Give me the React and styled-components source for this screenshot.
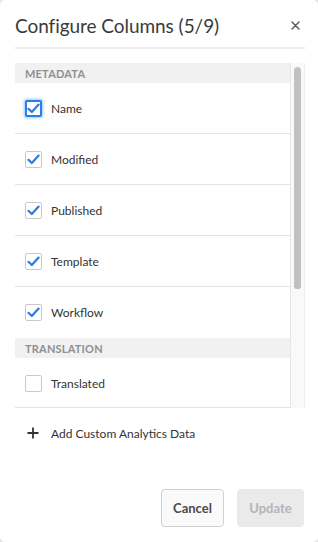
import React from "react";
import styled, { createGlobalStyle } from "styled-components";

const GlobalStyle = createGlobalStyle`
  html, body {
    margin: 0;
    padding: 0;
    background: #e4e4e4;
  }
  * {
    box-sizing: border-box;
  }
`;

const Dialog = styled.div`
  width: 318px;
  height: 542px;
  background: #fff;
  border-radius: 5px;
  padding: 0 13px 0 15px;
  display: flex;
  flex-direction: column;
  font-family: Lato, "Open Sans", sans-serif;
  color: #323232;
  overflow: hidden;
`;

const Header = styled.div`
  height: 49px;
  display: flex;
  align-items: center;
  justify-content: space-between;
  border-bottom: 2px solid #ececec;
  padding-top: 3px;
`;

const Title = styled.h1`
  margin: 0;
  font-size: 19px;
  font-weight: 400;
  color: #3a3a3a;
  letter-spacing: -0.05px;
`;

const CloseButton = styled.button`
  border: 0;
  background: none;
  padding: 0;
  width: 16px;
  height: 16px;
  display: flex;
  align-items: center;
  justify-content: center;
  margin-right: 2px;
  cursor: pointer;
`;

const ListFrame = styled.div`
  margin-top: 14px;
  height: 345px;
  display: flex;
  border-bottom: 1px solid #e2e2e2;
`;

const ListBody = styled.div`
  flex: 1;
  overflow: hidden;
`;

const ScrollTrack = styled.div`
  width: 15px;
  flex-shrink: 0;
  background: #f9f9f9;
  border-left: 1px solid #e6e6e6;
  border-right: 1px solid #ededed;
  padding: 4px 3px 0 3px;
  margin-bottom: -1px;
`;

const ScrollThumb = styled.div`
  height: 222px;
  border-radius: 5px 5px 4px 4px;
  background: #c1c1c1;
`;

const SectionTitle = styled.div`
  height: 20px;
  background: #f1f1f1;
  display: flex;
  align-items: center;
  padding-left: 10px;
  font-size: 11px;
  font-weight: 700;
  color: #8f8f8f;
  letter-spacing: 0.2px;
  text-transform: uppercase;
`;

const Row = styled.label`
  height: 51px;
  display: flex;
  align-items: center;
  gap: 9px;
  padding-left: 10px;
  border-bottom: 1px solid #e4e4e4;
  font-size: 12px;
  color: #333;
  cursor: pointer;

  &:last-child {
    border-bottom: 0;
  }
`;

const Box = styled.span`
  width: 17px;
  height: 17px;
  border-radius: 2px;
  border: ${(p) => (p.$focused ? "2px solid #2680eb" : "1px solid #c8c8c8")};
  box-shadow: ${(p) => (p.$focused ? "0 0 3px 1px rgba(38,128,235,0.45)" : "none")};
  background: #fff;
  display: flex;
  align-items: center;
  justify-content: center;
  flex-shrink: 0;
`;

const AddRow = styled.button`
  margin-top: 13px;
  border: 0;
  background: none;
  padding: 0 0 0 12px;
  height: 24px;
  display: flex;
  align-items: center;
  gap: 12px;
  font-family: inherit;
  font-size: 12px;
  color: #333;
  cursor: pointer;
`;

const Footer = styled.div`
  margin-top: auto;
  margin-bottom: 15px;
  display: flex;
  justify-content: flex-end;
  gap: 13px;
  padding-right: 1px;
`;

const Button = styled.button`
  height: 38px;
  padding: 0 11px;
  min-width: ${(p) => (p.$disabled ? 67 : 63)}px;
  border-radius: 4px;
  font-family: inherit;
  font-size: 13px;
  font-weight: 700;
  border: 1px solid ${(p) => (p.$disabled ? "#eaeaea" : "#d0d0d0")};
  background: ${(p) => (p.$disabled ? "#eaeaea" : "#fafafa")};
  color: ${(p) => (p.$disabled ? "#b5b5b5" : "#4b4b4b")};
  cursor: ${(p) => (p.$disabled ? "default" : "pointer")};
`;

const Check = () => (
  <svg width="13" height="11" viewBox="0 0 13 11">
    <path
      d="M1.5 5.8 L4.8 9 L11.6 1.6"
      fill="none"
      stroke="#2d7be0"
      strokeWidth="2.2"
      strokeLinecap="round"
      strokeLinejoin="round"
    />
  </svg>
);

const sections = [
  {
    title: "Metadata",
    items: [
      { label: "Name", checked: true, focused: true },
      { label: "Modified", checked: true },
      { label: "Published", checked: true },
      { label: "Template", checked: true },
      { label: "Workflow", checked: true },
    ],
  },
  {
    title: "Translation",
    items: [{ label: "Translated", checked: false }],
  },
];

const App = () => {
  return (
    <>
      <GlobalStyle />
      <Dialog>
        <Header>
          <Title>Configure Columns (5/9)</Title>
          <CloseButton aria-label="Close">
            <svg width="9" height="9" viewBox="0 0 9 9">
              <path d="M1 1 L8 8 M8 1 L1 8" stroke="#555" strokeWidth="1.4" strokeLinecap="round" />
            </svg>
          </CloseButton>
        </Header>
        <ListFrame>
          <ListBody>
            {sections.map((section) => (
              <div key={section.title}>
                <SectionTitle>{section.title}</SectionTitle>
                {section.items.map((item) => (
                  <Row key={item.label}>
                    <Box $focused={item.focused}>{item.checked && <Check />}</Box>
                    {item.label}
                  </Row>
                ))}
              </div>
            ))}
          </ListBody>
          <ScrollTrack>
            <ScrollThumb />
          </ScrollTrack>
        </ListFrame>
        <AddRow>
          <svg width="12" height="12" viewBox="0 0 12 12">
            <path d="M6 0.5 V11.5 M0.5 6 H11.5" stroke="#333" strokeWidth="1.8" />
          </svg>
          Add Custom Analytics Data
        </AddRow>
        <Footer>
          <Button>Cancel</Button>
          <Button $disabled>Update</Button>
        </Footer>
      </Dialog>
    </>
  );
};

export default App;
